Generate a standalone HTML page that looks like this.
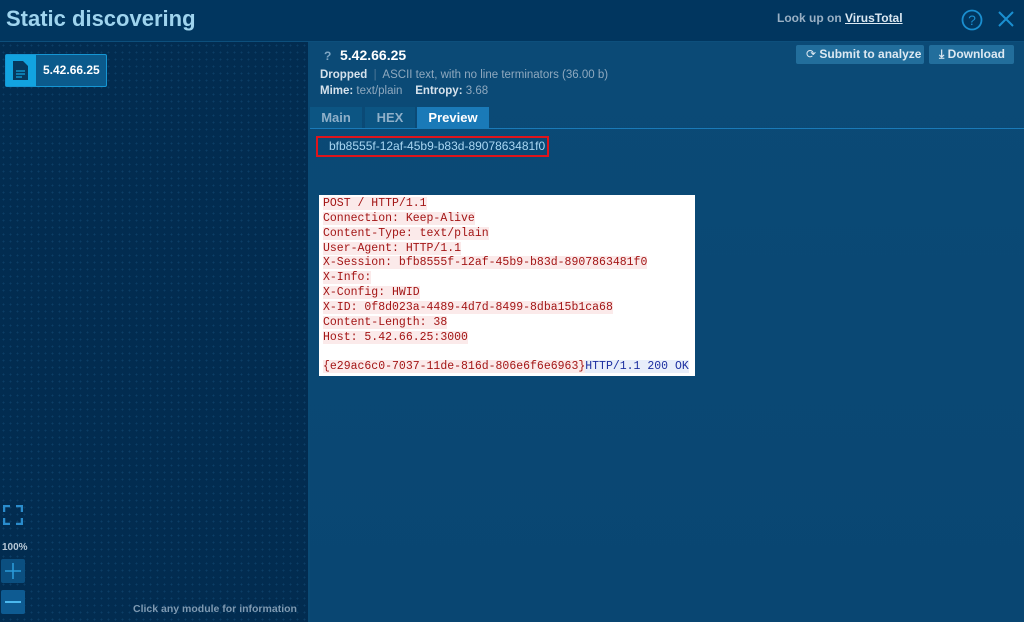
<!DOCTYPE html>
<html><head><style>
body{margin:0;width:1024px;height:622px;overflow:hidden;font-family:"Liberation Sans",sans-serif;background:#0a4a75;position:relative}
.hdr{position:absolute;left:0;top:0;width:1024px;height:41px;background:#01365f;border-bottom:1px solid #0d4f7c}
.title{position:absolute;left:6px;top:6px;font-size:22px;font-weight:bold;color:#9fd4ee}
.vt{position:absolute;left:777px;top:11px;font-size:12px;font-weight:bold;color:#9ab0c4}
.vt u{color:#dbe8f2}
.left{position:absolute;left:0;top:42px;width:308px;height:580px;background-color:#022c50;background-image:radial-gradient(#0c3e66 0.8px,transparent 1px);background-size:7px 7px}
.sep{position:absolute;left:308px;top:42px;width:2px;height:580px;background:#0a4a75}
.mod{position:absolute;left:5px;top:54px;width:100px;height:31px;border:1px solid #1596d4;background:#0b5a8c;border-radius:2px}
.mod .ic{position:absolute;left:0;top:0;width:30px;height:31px;background:#12a3e0}
.mod span{position:absolute;left:37px;top:8px;color:#fff;font-weight:bold;font-size:12px}
.right{position:absolute;left:310px;top:42px;width:714px;height:580px;background:linear-gradient(#0b4a76,#094672)}
.mono{font-family:"Liberation Mono",monospace;font-size:11.5px;line-height:14.85px}
.pre{position:absolute;left:319px;top:195px;width:376px;height:181px;background:#fff;padding-top:2px;box-sizing:border-box}
.pre div{padding-left:4px}
.pre i{font-style:normal;background:#fbeaea;color:#a31515}
.btn{position:absolute;top:45px;height:19px;background:#226e9c;color:#dde9f2;font-size:12px;font-weight:bold;line-height:19px;border-radius:2px}
.tab{position:absolute;top:107px;height:21px;line-height:21px;font-size:13px;font-weight:bold;color:#8fb0c9;background:#0c5583;text-align:center}
</style></head><body>
<div class="hdr"><div class="title">Static discovering</div>
<div class="vt">Look up on <u>VirusTotal</u></div>
<svg style="position:absolute;left:960px;top:8px" width="24" height="24"><circle cx="12" cy="12" r="9.5" fill="none" stroke="#1a8fd0" stroke-width="1.8"/><text x="12" y="17" text-anchor="middle" font-size="14" fill="#1a8fd0" font-family="Liberation Sans">?</text></svg>
<svg style="position:absolute;left:997px;top:10px" width="18" height="18"><path d="M2 2L16 16M16 2L2 16" stroke="#1a8fd0" stroke-width="2"/></svg>
</div>
<div class="left"></div>
<div class="sep"></div>
<div class="mod"><div class="ic"><svg width="30" height="31"><path d="M7 6h10l5 5v14H7z" fill="#06385e"/><path d="M10 16h9M10 19h9M10 22h6" stroke="#12a3e0" stroke-width="1.3"/></svg></div><span>5.42.66.25</span></div>
<svg style="position:absolute;left:3px;top:505px" width="20" height="20"><path d="M1 7V1h6M13 1h6v6M19 13v6h-6M7 19H1v-6" fill="none" stroke="#2a8ccc" stroke-width="2.5"/></svg>
<div style="position:absolute;left:2px;top:542px;font-size:10px;font-weight:bold;color:#b8c8d6">100%</div>
<div style="position:absolute;left:1px;top:559px;width:24px;height:24px;background:#0b4f80;border-radius:2px"><svg width="24" height="24"><path d="M12 4v16M4 12h16" stroke="#2a9ad8" stroke-width="1.6"/></svg></div>
<div style="position:absolute;left:1px;top:590px;width:24px;height:24px;background:#0e5b92;border-radius:2px"><svg width="24" height="24"><path d="M4 12h16" stroke="#4bb8ee" stroke-width="2"/></svg></div>
<div style="position:absolute;left:133px;top:603px;font-size:10.5px;font-weight:bold;color:#7f9ab2">Click any module for information</div>
<div class="right"></div>
<div style="position:absolute;left:324px;top:49px;font-size:12px;font-weight:bold;color:#7fa6c4">?</div>
<div style="position:absolute;left:340px;top:47px;font-size:14px;font-weight:bold;color:#fff">5.42.66.25</div>
<div style="position:absolute;left:320px;top:69px;font-size:11.5px;color:#8fa9bf"><b style="color:#d6e2ec">Dropped</b> &nbsp;<span style="color:#4f7898">|</span>&nbsp; ASCII text, with no line terminators (36.00 b)</div>
<div style="position:absolute;left:320px;top:85px;font-size:11.5px;color:#8fa9bf"><b style="color:#d6e2ec">Mime:</b> text/plain &nbsp;&nbsp; <b style="color:#d6e2ec">Entropy:</b> 3.68</div>
<div class="btn" style="left:796px;width:128px"><span style="margin-left:10px;font-weight:normal">⟳</span> Submit to analyze</div>
<div class="btn" style="left:929px;width:85px"><span style="margin-left:10px">⤓</span> Download</div>
<div class="tab" style="left:310px;width:52px">Main</div>
<div class="tab" style="left:365px;width:50px">HEX</div>
<div class="tab" style="left:417px;width:72px;background:#1a7ab8;color:#fff">Preview</div>
<div style="position:absolute;left:310px;top:128px;width:714px;height:1px;background:#1a7ab8"></div>
<div style="position:absolute;left:316px;top:136px;width:233px;height:21px;border:2px solid #e0141b;box-sizing:border-box;color:#a9d6f2;font-size:12px;line-height:17px;padding-left:11px">bfb8555f-12af-45b9-b83d-8907863481f0</div>
<div class="pre mono">
<div><i>POST / HTTP/1.1</i></div>
<div><i>Connection: Keep-Alive</i></div>
<div><i>Content-Type: text/plain</i></div>
<div><i>User-Agent: HTTP/1.1</i></div>
<div><i>X-Session: bfb8555f-12af-45b9-b83d-8907863481f0</i></div>
<div><i>X-Info: </i></div>
<div><i>X-Config: HWID</i></div>
<div><i>X-ID: 0f8d023a-4489-4d7d-8499-8dba15b1ca68</i></div>
<div><i>Content-Length: 38</i></div>
<div><i>Host: 5.42.66.25:3000</i></div>
<div>&nbsp;</div>
<div><i>{e29ac6c0-7037-11de-816d-806e6f6e6963}</i><span style="background:#e8eefa;color:#1c2fa0">HTTP/1.1 200 OK</span></div>
</div>
</body></html>
